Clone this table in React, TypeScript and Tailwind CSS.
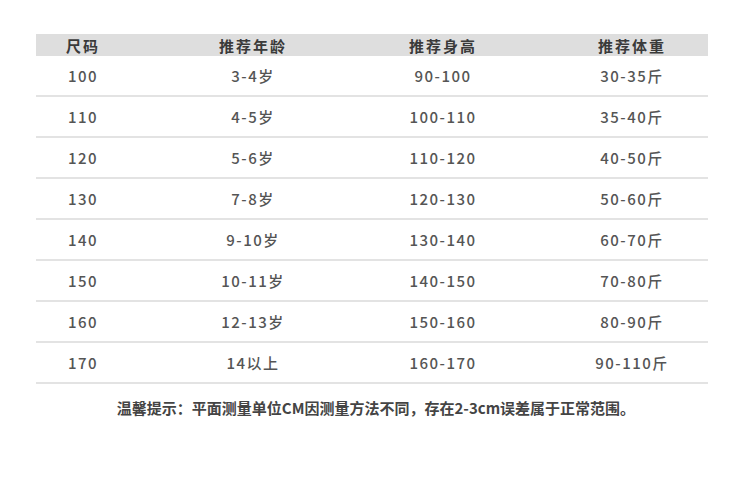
import React from "react";

const rows = [
  ["100", "3-4岁", "90-100", "30-35斤"],
  ["110", "4-5岁", "100-110", "35-40斤"],
  ["120", "5-6岁", "110-120", "40-50斤"],
  ["130", "7-8岁", "120-130", "50-60斤"],
  ["140", "9-10岁", "130-140", "60-70斤"],
  ["150", "10-11岁", "140-150", "70-80斤"],
  ["160", "12-13岁", "150-160", "80-90斤"],
  ["170", "14以上", "160-170", "90-110斤"],
];

const font = { fontFamily: '"Noto Sans CJK SC", "Noto Sans", sans-serif' };

export default function App() {
  return (
    <div className="w-[748px] h-[483px] bg-white pt-[34px] pl-[36px]" style={font}>
      <div className="w-[672px]">
        <div className="grid grid-cols-[94px_246px_134px_198px] h-[22px] bg-[#dedede] items-center text-[15px] font-bold text-[#3a3a3a] tracking-[2px] leading-none">
          <div className="text-center">尺码</div>
          <div className="text-center">推荐年龄</div>
          <div className="text-center">推荐身高</div>
          <div className="text-center pl-[46px]">推荐体重</div>
        </div>
        {rows.map((r) => (
          <div
            key={r[0]}
            className="grid grid-cols-[94px_246px_134px_198px] h-[41px] border-b-2 border-[#e3e3e3] items-center pt-[0px] text-[15px] font-medium text-[#555555] tracking-[1.5px] leading-none"
          >
            <div className="text-center">{r[0]}</div>
            <div className="text-center">{r[1]}</div>
            <div className="text-center">{r[2]}</div>
            <div className="text-center pl-[46px]">{r[3]}</div>
          </div>
        ))}
        <div className="mt-[13px] pl-[8px] text-center text-[15px] leading-[22px] font-semibold text-[#444444] tracking-[0px]">
          温馨提示：平面测量单位CM因测量方法不同，存在2-3cm误差属于正常范围。
        </div>
      </div>
    </div>
  );
}
